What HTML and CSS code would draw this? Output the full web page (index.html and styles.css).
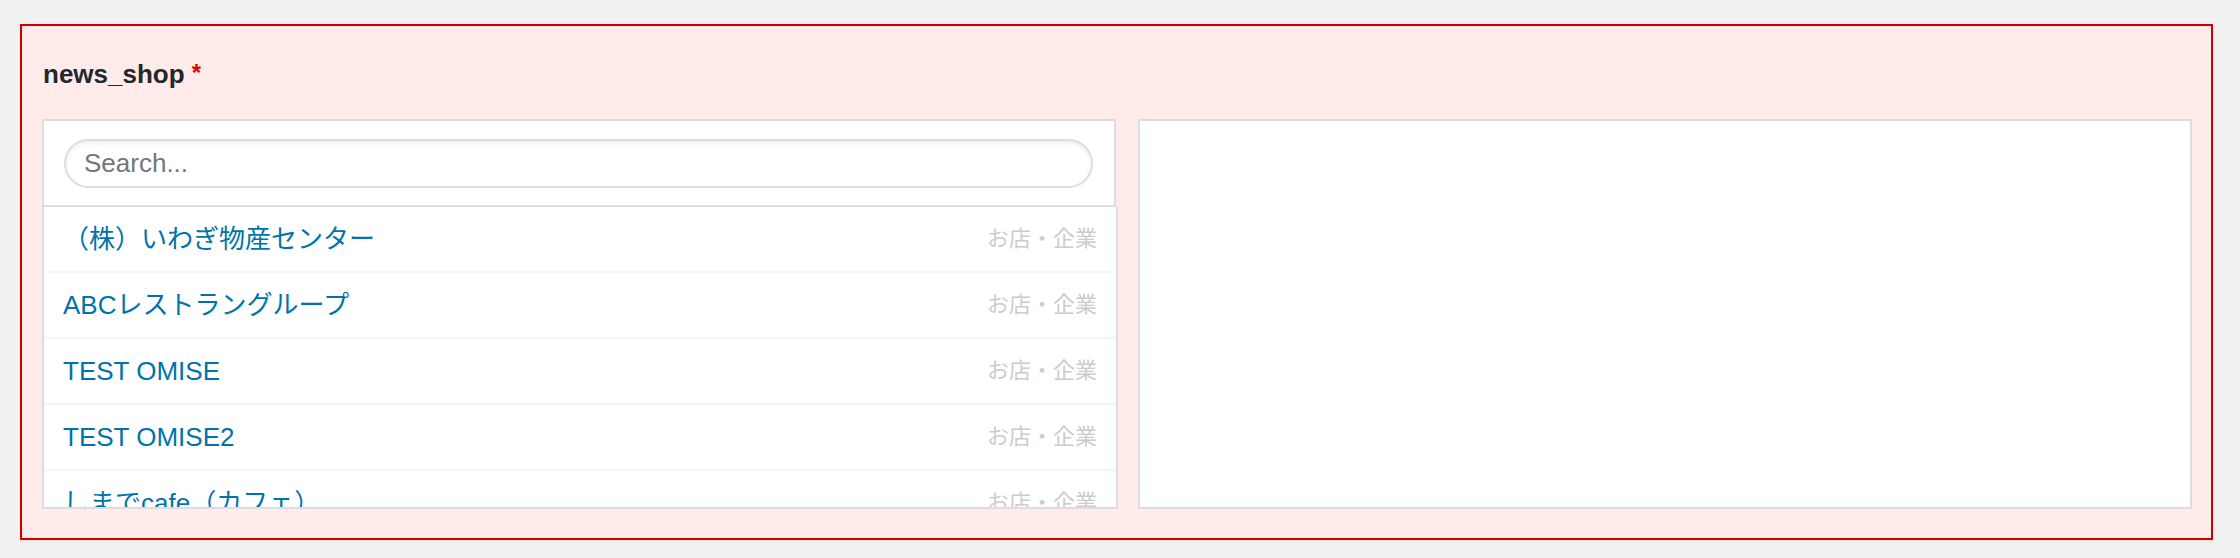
FILE: index.html
```html
<!DOCTYPE html>
<html lang="ja">
<head>
    <meta charset="UTF-8">
    <title>news_shop</title>
    <link rel="stylesheet" href="styles.css">
</head>
<body>
    <div class="field field-error">
        <label class="field-label">news_shop <span class="required">*</span></label>

        <div class="relationship">
            <!-- left: search + choices -->
            <div class="choices-col">
                <div class="filters">
                    <input type="text" class="search" placeholder="Search...">
                </div>
                <ul class="choices">
                    <li><span class="title">（株）いわぎ物産センター</span><span class="type">お店・企業</span></li>
                    <li><span class="title">ABCレストラングループ</span><span class="type">お店・企業</span></li>
                    <li><span class="title">TEST OMISE</span><span class="type">お店・企業</span></li>
                    <li><span class="title">TEST OMISE2</span><span class="type">お店・企業</span></li>
                    <li><span class="title">しまでcafe（カフェ）</span><span class="type">お店・企業</span></li>
                </ul>
            </div>

            <!-- right: selected values -->
            <div class="values"></div>
        </div>
    </div>
</body>
</html>
```

FILE: styles.css
```css
body {
    margin: 0;
    padding: 24px 27px 19px 20px;
    background: #f1f1f1;
    font-family: 'Liberation Sans', 'Noto Sans CJK JP', sans-serif;
    color: #23282d;
}

.field {
    background: #ffebe9;
    border: 2px solid #cc0000;
    box-shadow: 0 2px 2px rgba(0, 0, 0, 0.05);
    padding: 29px 19px 29px 20px;
}

.field-label {
    display: block;
    font-size: 26px;
    line-height: 36px;
    font-weight: bold;
    color: #23282d;
    margin-bottom: 27px;
    padding-left: 1px;
}

.required {
    color: #dd0000;
    font-size: 24px;
    vertical-align: 2px;
}

.relationship {
    display: grid;
    grid-template-columns: 1074px 1054px;
    column-gap: 22px;
    align-items: start;
}

.filters {
    background: #ffffff;
    border: 2px solid #dddddd;
    padding: 18px 21px 17px 20px;
}

.search {
    display: block;
    box-sizing: border-box;
    width: 100%;
    height: 49px;
    margin: 0;
    padding: 0 18px;
    border: 2px solid #dddddd;
    border-radius: 25px;
    box-shadow: inset 0 2px 4px rgba(0, 0, 0, 0.07);
    font-family: inherit;
    font-size: 26px;
    color: #32373c;
    background: #ffffff;
    outline: none;
}

.search::placeholder {
    color: #72777c;
}

.choices {
    list-style: none;
    margin: 0 -2px 0 0;
    padding: 0;
    box-sizing: border-box;
    height: 302px;
    overflow: hidden;
    background: #ffffff;
    border: 2px solid #dddddd;
    border-top: none;
}

.choices li {
    display: flex;
    justify-content: space-between;
    align-items: center;
    height: 64px;
    padding: 0 19px;
    border-bottom: 2px solid #f5f5f5;
}

.choices .title {
    color: #0073aa;
    font-size: 26px;
    line-height: 26px;
}

.choices .type {
    color: #cccccc;
    font-size: 22px;
    line-height: 22px;
}

.values {
    box-sizing: border-box;
    height: 390px;
    background: #ffffff;
    border: 2px solid #dddddd;
}
```
